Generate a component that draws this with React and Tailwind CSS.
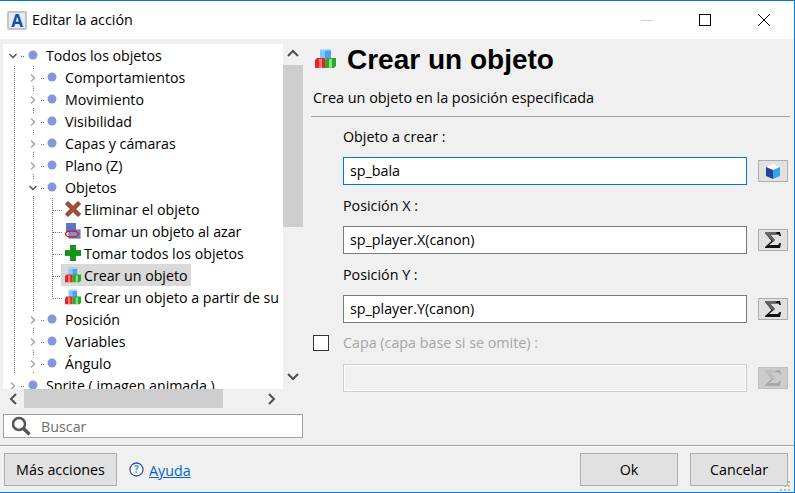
const font = { fontFamily: '"Open Sans", "Noto Sans", sans-serif' };

const Cubes = ({ size = 16 }) => (
  <svg width={size} height={size} viewBox="0 0 21 21">
    <path d="M5 1h11v10H5z" fill="#4f9fee" />
    <path d="M5 1h5v10H5z" fill="#86c6f8" />
    <path d="M5 1h11v1.500H5z" fill="#b5dcfa" />
    <path d="M0 12l2-2h8v10H0z" fill="#e8232b" />
    <path d="M4 11h3v9H4z" fill="#f97c7c" />
    <path d="M10 12l2-2h9v8l-2 2h-9z" fill="#2aa82a" />
    <path d="M14 11h3v9h-3z" fill="#8ade80" />
  </svg>
);

const CrossIcon = () => (
  <svg width="16" height="16" viewBox="0 0 16 16">
    <path d="M0.500 3L3 0.500l5 5 5-5L15.500 3l-5 5 5 5-2.500 2.500-5-5-5 5L0.500 13l5-5z" fill="#b5482c" stroke="#5c3a32" strokeWidth="1" />
  </svg>
);

const PickIcon = () => (
  <svg width="16" height="16" viewBox="0 0 16 16">
    <rect x="1" y="0" width="10" height="9" fill="#5a76c4" />
    <rect x="4" y="7" width="11" height="8" fill="#7d93d4" stroke="#4f68b0" />
    <ellipse cx="7" cy="11" rx="6.5" ry="3" fill="none" stroke="#e01020" strokeWidth="1.4" />
  </svg>
);

const PlusIcon = () => (
  <svg width="16" height="16" viewBox="0 0 16 16">
    <path d="M5.5 0h5v5.500h5.500v5h-5.500v5.500h-5v-5.500h-5.500v-5h5.500z" fill="#0c9a12" stroke="#06660c" strokeWidth="0.6" />
  </svg>
);

const Sigma = ({ disabled }) => (
  <svg width="18" height="16" viewBox="0 0 18 16">
    <path d="M1 0h15l1 4h-1.500l-1-1.500H6l5 5.500-6 5h9l1.500-2H17l-1 5H1v-1l6.500-6L1 1z" fill={disabled ? '#a8a8a8' : '#111'} />
    <path d="M1 0h12l-2 2.500H6l5 5.500-2 1.500L1 1z" fill={disabled ? '#bdbdbd' : '#666'} />
  </svg>
);

const Chevron = ({ open, dark, x, y }) => (
  <path
    d={open ? `M${x - 3.500} ${y - 2}l3.500 3.500 3.500-3.500` : `M${x - 2} ${y - 3.500}l3.500 3.500-3.500 3.500`}
    fill="none"
    stroke={dark ? '#555' : '#a6a6a6'}
    strokeWidth="1.500"
  />
);

// dotted guides and expander drawn per row, x positions are from the tree's left edge
const Guides = ({ level, open, rootLine, lastChild }) => {
  const elbow = level === 0 ? 10 : 30;
  return (
    <svg width="76" height="22" className="absolute left-0 top-0">
      {rootLine && <path d="M11.500 0v22" stroke="#777" strokeDasharray="1 1" />}
      {level === 2 && <path d="M30.500 0v22" stroke="#777" strokeDasharray="1 1" />}
      {level === 1 && <path d="M30.500 0v3M30.500 20v2" stroke="#777" strokeDasharray="1 1" />}
      {level === 2 && (
        <path d={`M49.500 0v${lastChild ? 12.500 : 22}M50 12.500h9`} stroke="#777" strokeDasharray="1 1" fill="none" />
      )}
      {level < 2 && <path d={`M${elbow + 8} 12.500h3`} stroke="#777" strokeDasharray="1 1" />}
      {level < 2 && <Chevron x={level === 0 ? 10 : 30} y={12} open={open} dark={open} />}
      {level < 2 && <circle cx={level === 0 ? 30 : 49} cy="11" r="4.500" fill="#8497d8" />}
    </svg>
  );
};

const rows = [
  { text: 'Todos los objetos', level: 0, open: true },
  { text: 'Comportamientos', level: 1, rootLine: true },
  { text: 'Movimiento', level: 1, rootLine: true },
  { text: 'Visibilidad', level: 1, rootLine: true },
  { text: 'Capas y cámaras', level: 1, rootLine: true },
  { text: 'Plano (Z)', level: 1, rootLine: true },
  { text: 'Objetos', level: 1, open: true, rootLine: true },
  { text: 'Eliminar el objeto', level: 2, icon: <CrossIcon />, rootLine: true },
  { text: 'Tomar un objeto al azar', level: 2, icon: <PickIcon />, rootLine: true },
  { text: 'Tomar todos los objetos', level: 2, icon: <PlusIcon />, rootLine: true },
  { text: 'Crear un objeto', level: 2, icon: <Cubes />, selected: true, rootLine: true },
  { text: 'Crear un objeto a partir de su', level: 2, icon: <Cubes />, lastChild: true, rootLine: true },
  { text: 'Posición', level: 1, rootLine: true },
  { text: 'Variables', level: 1, rootLine: true },
  { text: 'Ángulo', level: 1, rootLine: true },
  { text: 'Sprite ( imagen animada )', level: 0 },
];

const TreeRow = ({ row }) => {
  const pad = row.level === 0 ? 'pl-[43px]' : row.level === 1 ? 'pl-[62px]' : 'pl-[58px]';
  return (
    <div className={`relative h-[22px] flex items-center whitespace-nowrap text-[14.2px] text-black shrink-0 ${pad}`}>
      <Guides level={row.level} open={row.open} rootLine={row.rootLine} lastChild={row.lastChild} />
      {row.level === 2 && (
        <div className={`relative flex items-center h-[22px] ${row.selected ? 'bg-[#d9d9d9]' : ''}`}>
          <span className="w-[23px] flex justify-center">{row.icon}</span>
          <span className="pr-[3px] pt-[2px]">{row.text}</span>
        </div>
      )}
      {row.level < 2 && <span className="pt-[2px]">{row.text}</span>}
    </div>
  );
};

const Arrow = ({ dir }) => {
  const d = {
    up: 'M2 8l5-5 5 5',
    down: 'M2 4l5 5 5-5',
    left: 'M9 2L4 7l5 5',
    right: 'M5 2l5 5-5 5',
  }[dir];
  return (
    <svg width="14" height="14" viewBox="0 0 14 14">
      <path d={d} fill="none" stroke="#505050" strokeWidth="2" />
    </svg>
  );
};

const Field = ({ label, value, focused, icon }) => (
  <div className="flex flex-col">
    <div className="h-[40px] pl-[32px] flex items-center text-[14.3px] text-black">{label}</div>
    <div className="flex items-center pl-[32px]">
      <div className={`w-[404px] h-[28px] bg-white border px-[6px] pb-px flex items-center text-[14.3px] text-black ${focused ? 'border-[#0078d7]' : 'border-[#7a7a7a]'}`}>
        {value}
      </div>
      <button className="ml-[11px] w-[30px] h-[22px] bg-[#e1e1e1] border border-[#adadad] flex items-center justify-center">
        {icon}
      </button>
    </div>
  </div>
);

export default function App() {
  return (
    <div style={font} className="w-[795px] h-[493px] relative overflow-hidden bg-[#f0f0f0] border-t border-r border-b border-[#0078d7] flex flex-col">
      {/* title bar */}
      <div className="h-[38px] bg-white flex items-center shrink-0">
        <div className="ml-[7px] w-[20px] h-[19px] rounded-[2px] bg-[#e6eaf2] border-2 border-[#c4c4c4] flex items-center justify-center text-[17px] leading-none font-bold text-[#0f4fb0]">
          A
        </div>
        <span className="ml-[5px] text-[14.3px] text-black">Editar la acción</span>
        <div className="ml-auto flex items-center">
          <svg width="12" height="12" viewBox="0 0 12 12" className="mr-[46px]"><path d="M0 6.500h12" stroke="#ccc" /></svg>
          <svg width="12" height="12" viewBox="0 0 12 12" className="mr-[47px]"><rect x="0.500" y="0.500" width="11" height="11" fill="none" stroke="#000" /></svg>
          <svg width="12" height="12" viewBox="0 0 12 12" className="mr-[24px]"><path d="M0 0l12 12M12 0L0 12" stroke="#000" /></svg>
        </div>
      </div>

      {/* body */}
      <div className="flex flex-1 pl-[3px] pt-[5px]">
        <div className="w-[300px] flex flex-col">
          <div className="flex h-[345px]">
            <div className="w-[280px] bg-white overflow-hidden flex flex-col">
              {rows.map((row) => (
                <TreeRow key={row.text} row={row} />
              ))}
            </div>
            <div className="w-[20px] flex flex-col items-stretch">
              <div className="h-[21px] flex items-center justify-center"><Arrow dir="up" /></div>
              <div className="h-[162px] bg-[#cdcdcd]" />
              <div className="flex-1 flex items-end justify-center pb-[5px]"><Arrow dir="down" /></div>
            </div>
          </div>
          <div className="w-[280px] h-[19px] flex items-center">
            <div className="w-[21px] flex justify-center"><Arrow dir="left" /></div>
            <div className="w-[199px] h-[19px] bg-[#cdcdcd]" />
            <div className="flex-1 flex justify-end pr-[5px]"><Arrow dir="right" /></div>
          </div>
          <div className="mt-[6px] h-[24px] bg-white border border-[#a0a0a0] flex items-center pl-[7px]">
            <svg width="21" height="20" viewBox="0 0 21 20">
              <circle cx="8" cy="8" r="6" fill="none" stroke="#555" strokeWidth="2.500" />
              <path d="M12.500 12.500l6 6" stroke="#555" strokeWidth="3.500" />
            </svg>
            <span className="ml-[9px] pt-[2px] text-[14.3px] text-[#6d6d6d]">Buscar</span>
          </div>
        </div>

        <div className="flex-1 ml-[8px] mr-[4px] flex flex-col">
          <div className="h-[73px] border-b border-[#a0a0a0] flex flex-col">
            <div className="flex items-center pl-[4px] h-[32px]">
              <div className="-mt-[3px] flex"><Cubes size={21} /></div>
              <h1 className="ml-[11px] text-[28px] leading-none font-bold text-black" style={{ fontFamily: '"Liberation Sans", sans-serif' }}>
                Crear un objeto
              </h1>
            </div>
            <p className="ml-[2px] mt-[11px] text-[14.4px] text-black">Crea un objeto en la posición especificada</p>
          </div>
          <div className="flex flex-col gap-px">
            <Field
              label="Objeto a crear :"
              value="sp_bala"
              focused
              icon={
                <svg width="14" height="15" viewBox="0 0 14 15">
                  <path d="M7 0l7 3-7 3-7-3z" fill="#fff" />
                  <path d="M0 3l7 3v9l-7-3z" fill="#2a3f9e" />
                  <path d="M14 3L7 6v9l7-3z" fill="#2ea8e8" />
                </svg>
              }
            />
            <Field label="Posición X :" value="sp_player.X(canon)" icon={<Sigma />} />
            <Field label="Posición Y :" value="sp_player.Y(canon)" icon={<Sigma />} />
            <div className="flex flex-col">
              <div className="h-[40px] pb-[2px] flex items-center text-[14.3px] text-[#a6a6a6]">
                <div className="w-[16px] h-[16px] ml-[2px] mr-[14px] bg-white border border-[#333]" />
                Capa (capa base si se omite) :
              </div>
              <div className="flex items-center pl-[32px]">
                <div className="w-[404px] h-[28px] bg-[#f0f0f0] border border-[#cccccc] shadow-[inset_0_0_0_1px_#ffffff]" />
                <button className="ml-[11px] w-[30px] h-[22px] bg-[#cccccc] border border-[#bfbfbf] flex items-center justify-center">
                  <Sigma disabled />
                </button>
              </div>
            </div>
          </div>
        </div>
      </div>

      {/* footer */}
      <div className="h-[47px] shrink-0 border-t border-[#a0a0a0] shadow-[inset_0_1px_0_#ffffff] flex items-start pt-[7px] text-[14.3px] text-black">
        <button className="ml-[4px] w-[113px] h-[33px] bg-[#e1e1e1] border border-[#adadad]">Más acciones</button>
        <svg width="15" height="15" viewBox="0 0 15 15" className="ml-[12px] mt-[9px]">
          <circle cx="7.500" cy="7.500" r="6.500" fill="#fff" stroke="#3b4fa8" strokeWidth="1.300" />
          <text x="7.500" y="11" fontSize="10" fontWeight="700" textAnchor="middle" fill="#2d8fe0">?</text>
        </svg>
        <a className="ml-[5px] mt-[7px] text-[#0066cc] underline">Ayuda</a>
        <button className="ml-auto w-[98px] h-[33px] bg-[#e1e1e1] border border-[#adadad]">Ok</button>
        <button className="ml-[12px] mr-[6px] w-[98px] h-[33px] bg-[#e1e1e1] border border-[#adadad]">Cancelar</button>
      </div>

      {/* resize grip */}
      <svg width="11" height="11" viewBox="0 0 11 11" className="absolute right-[4px] bottom-px">
        <path d="M9 1h2v2H9zM9 5h2v2H9zM5 5h2v2H5zM9 9h2v2H9zM5 9h2v2H5zM1 9h2v2H1z" fill="#b8b8b8" />
      </svg>
    </div>
  );
}
